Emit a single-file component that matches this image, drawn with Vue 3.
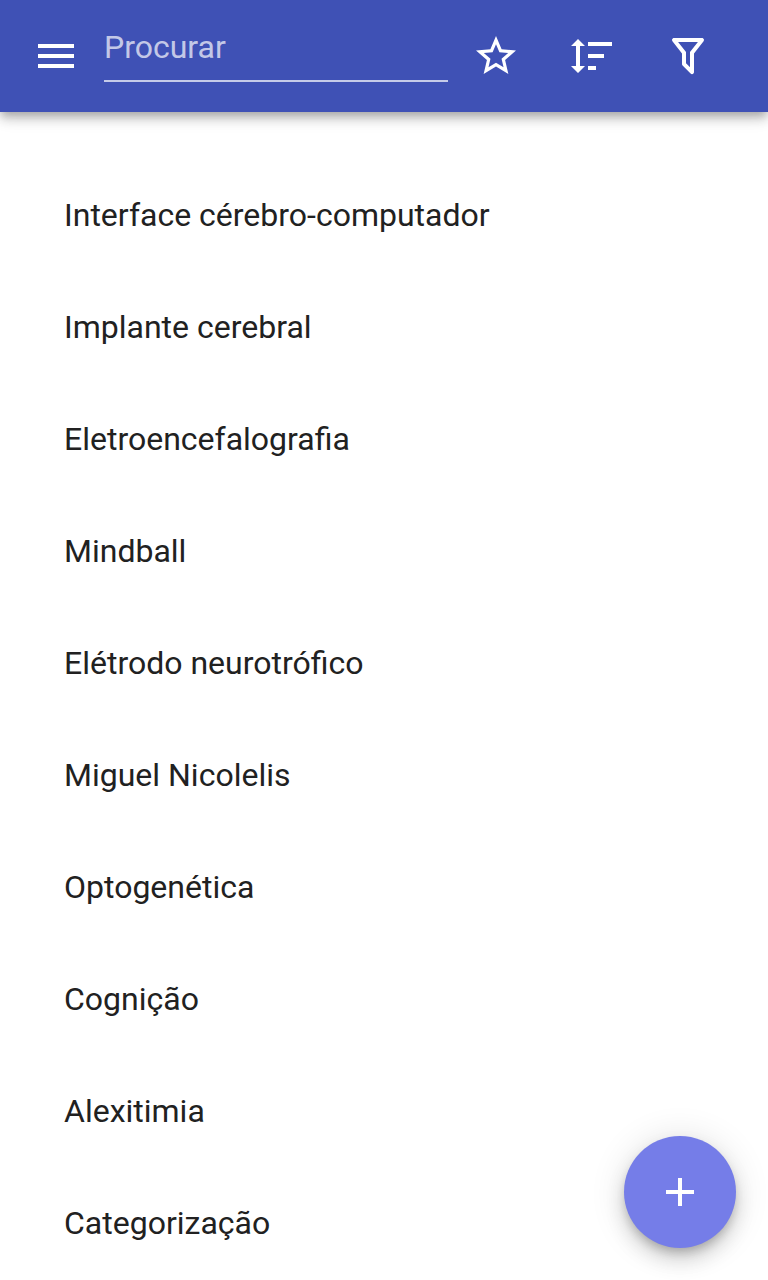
<script setup>
const items = ['Interface cérebro-computador', 'Implante cerebral', 'Eletroencefalografia', 'Mindball', 'Elétrodo neurotrófico', 'Miguel Nicolelis', 'Optogenética', 'Cognição', 'Alexitimia', 'Categorização']
</script>

<template>
  <div class="screen">
    <header class="bar">
      <button class="icon menu" aria-label="Menu">
        <svg width="48" height="48" viewBox="0 0 24 24"><path d="M3 18h18v-2H3v2zm0-5h18v-2H3v2zm0-7v2h18V6H3z" /></svg>
      </button>
      <label class="search"><span>Procurar</span></label>
      <button class="icon star" aria-label="Favoritos">
        <svg width="48" height="48" viewBox="0 0 24 24"><path d="M22 9.24l-7.19-.62L12 2 9.19 8.63 2 9.24l5.46 4.73L5.82 21 12 17.27 18.18 21l-1.63-7.03L22 9.24zM12 15.4l-3.76 2.27 1-4.28-3.32-2.88 4.38-.38L12 6.1l1.71 4.04 4.38.38-3.32 2.88 1 4.28L12 15.4z" /></svg>
      </button>
      <button class="icon sort" aria-label="Ordenar">
        <svg width="48" height="48" viewBox="0 0 48 48"><path d="M10 7l7 7h-5v20h5l-7 7-7-7h5V14H3zM20 10h24v4H20zM20 22h16v4H20zM20 34h8v4h-8z" /></svg>
      </button>
      <button class="icon filter" aria-label="Filtrar">
        <svg width="48" height="48" viewBox="0 0 24 24"><path d="M15 19.88c.04.3-.06.62-.29.83a.996.996 0 0 1-1.41 0L9.29 16.7a.989.989 0 0 1-.29-.83v-5.12L4.21 4.62a1 1 0 0 1 .17-1.4c.19-.14.4-.22.62-.22h14c.22 0 .43.08.62.22a1 1 0 0 1 .17 1.4L15 10.75v9.13M7.04 5L11 10.06v5.52l2 2v-7.53L16.96 5H7.04z" /></svg>
      </button>
    </header>
    <main class="list">
      <div v-for="item in items" :key="item" class="row">{{ item }}</div>
    </main>
    <button class="fab" aria-label="Adicionar">
      <svg width="48" height="48" viewBox="0 0 24 24"><path d="M19 13h-6v6h-2v-6H5v-2h6V5h2v6h6v2z" /></svg>
    </button>
  </div>
</template>

<style>
body { margin: 0; background: #fff; }
</style>

<style scoped>
.screen { height: 1280px; overflow: hidden; position: relative; display: flex; flex-direction: column; background: #fff; font-family: Roboto, sans-serif; font-size: 32px; }
button { border: 0; padding: 0; background: none; }
svg { display: block; fill: #fff; }
.bar { height: 112px; flex: none; box-sizing: border-box; padding: 0 56px 0 32px; display: flex; align-items: center; background: #3f51b5; box-shadow: 0 4px 8px -2px rgba(0,0,0,.2), 0 8px 10px rgba(0,0,0,.14), 0 2px 20px rgba(0,0,0,.12); position: relative; }
.icon { flex: none; width: 48px; height: 48px; }
.search { width: 344px; height: 82px; align-self: flex-start; box-sizing: border-box; margin-left: 24px; padding-top: 27px; border-bottom: 2px solid rgba(255,255,255,.7); color: rgba(255,255,255,.7); line-height: 40px; }
.star { margin-left: 24px; }
.sort, .filter { margin-left: 48px; }
.list { padding-top: 47px; }
.row { height: 112px; padding-left: 64px; line-height: 112px; color: #212121; }
.fab { position: absolute; right: 32px; bottom: 32px; width: 112px; height: 112px; border-radius: 50%; background: #757de8; display: flex; align-items: center; justify-content: center; box-shadow: 0 6px 10px -2px rgba(0,0,0,.2), 0 12px 20px rgba(0,0,0,.14), 0 2px 36px rgba(0,0,0,.12); }
</style>
